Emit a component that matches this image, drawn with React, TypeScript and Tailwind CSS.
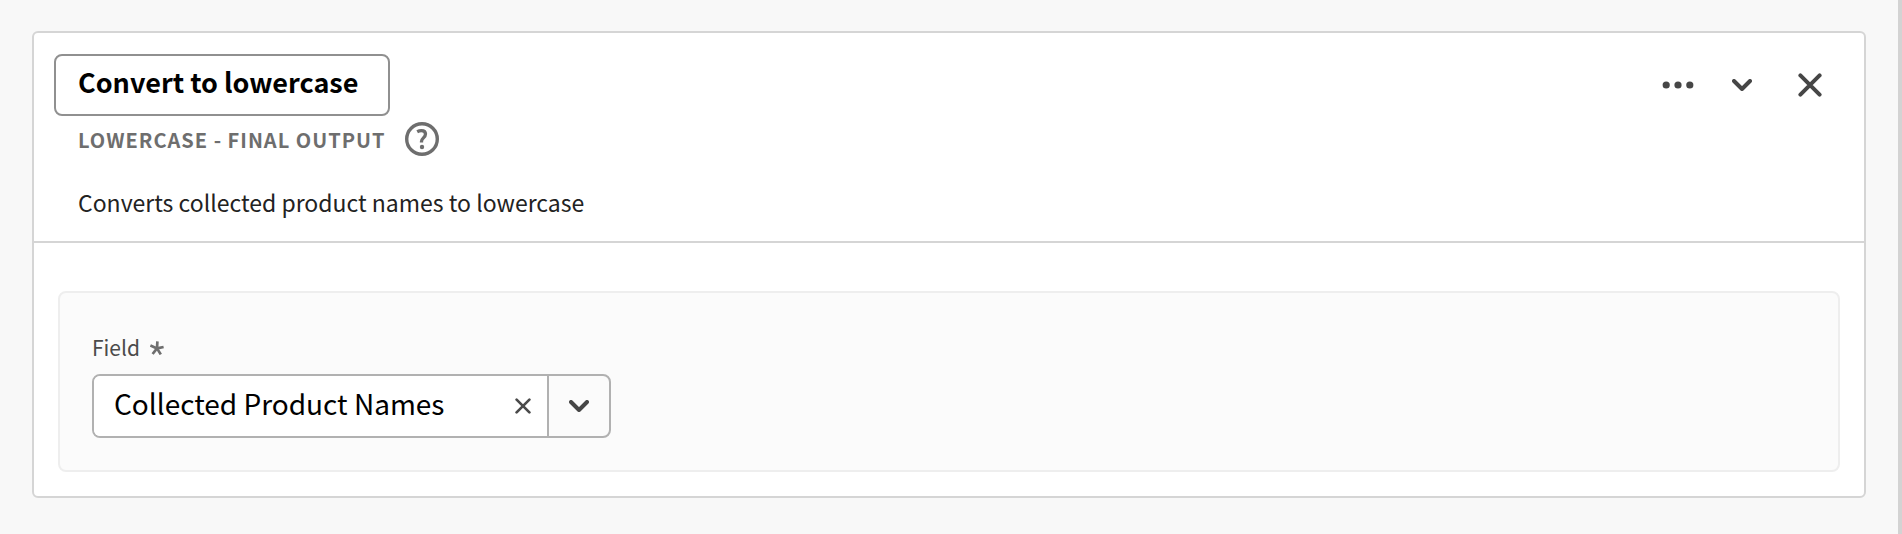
import { useState } from 'react';

function MoreIcon() {
  return (
    <svg width="32" height="8" viewBox="0 0 32 8" fill="currentColor" aria-hidden="true">
      <circle cx="4.2" cy="4" r="3.6" />
      <circle cx="16" cy="4" r="3.6" />
      <circle cx="27.800" cy="4" r="3.6" />
    </svg>
  );
}

function ChevronIcon() {
  return (
    <svg width="20" height="12" viewBox="0 0 20 12" fill="none" stroke="currentColor" strokeWidth="4" strokeLinecap="round" strokeLinejoin="round" aria-hidden="true">
      <path d="M2 2l8 8 8-8" />
    </svg>
  );
}

function CloseIcon({ size, stroke }: { size: number; stroke: number }) {
  return (
    <svg width={size} height={size} viewBox="0 0 24 24" fill="none" stroke="currentColor" strokeWidth={stroke} strokeLinecap="round" aria-hidden="true">
      <path d="M2.4 2.4l19.2 19.2M21.6 2.4L2.4 21.6" />
    </svg>
  );
}

function HelpIcon() {
  return (
    <svg width="34" height="34" viewBox="0 0 34 34" fill="none" stroke="currentColor" aria-hidden="true">
      <circle cx="17" cy="17" r="15.3" strokeWidth="3.4" />
      <path d="M12.2 9.700c1.300-.7 2.800-1.100 4.200-1.100 2.600 0 4.100 1.400 4.100 3.500 0 3.600-4 3.900-4 7.300v1.200" strokeWidth="3.3" />
      <circle cx="17" cy="25" r="2.2" fill="currentColor" stroke="none" />
    </svg>
  );
}

function AsteriskIcon() {
  return (
    <svg width="14" height="14" viewBox="0 0 14 14" stroke="currentColor" strokeWidth="2.700" aria-hidden="true">
      <path d="M7 7.400L7.400.4M7 7.400L13.600 6M7 7.400L10.800 13.400M7 7.400L2.600 13M7 7.400L.4 4.400" />
    </svg>
  );
}

export default function App() {
  const [title, setTitle] = useState('Convert to lowercase');
  const [field, setField] = useState('Collected Product Names');

  return (
    <main className="min-h-screen border-r-4 border-[#d3d3d3] bg-[#f8f8f8] pt-[31px] pr-8 pb-9 pl-8 font-['Noto_Sans_CJK_SC','Open_Sans',sans-serif]">
      <section className="rounded-md border-2 border-[#d5d5d5] bg-white">
        <header className="border-b-2 border-[#d5d5d5] pt-[21px] pr-[18px] pb-[21px] pl-5">
          <div className="flex items-center justify-between">
            <input
              aria-label="Title"
              value={title}
              onChange={(e) => setTitle(e.target.value)}
              className="h-[62px] w-[336px] rounded-lg border-2 border-[#909090] bg-white px-[22px] pb-2 text-[27px] font-bold text-black"
            />
            <div className="flex text-[#464646]">
              <button type="button" aria-label="More actions" className="flex h-12 w-16 items-center justify-center">
                <MoreIcon />
              </button>
              <button type="button" aria-label="Collapse" className="flex h-12 w-16 items-center justify-center">
                <ChevronIcon />
              </button>
              <button type="button" aria-label="Remove" className="flex h-12 w-18 items-center justify-center">
                <CloseIcon size={24} stroke={4} />
              </button>
            </div>
          </div>
          <div className="flex h-[46px] items-center gap-5 pl-6 text-[#6e6e6e]">
            <h2 className="pt-[2px] text-xl font-bold tracking-wider uppercase">Lowercase - Final output</h2>
            <button type="button" aria-label="Help">
              <HelpIcon />
            </button>
          </div>
          <p className="mt-[22px] pl-6 text-[23px] leading-9 text-[#222222]">Converts collected product names to lowercase</p>
        </header>

        <div className="px-6 pt-12 pb-6">
          <div className="rounded-lg border-2 border-[#eeeeee] bg-[#fbfbfb] px-8 pt-[39px] pb-8">
            <label htmlFor="field" className="flex h-8 items-center gap-[10px] text-[21px] text-[#4b4b4b]">
              Field
              <span className="text-[#6e6e6e]">
                <AsteriskIcon />
              </span>
            </label>
            <div className="mt-[10px] flex h-16 w-[519px] overflow-hidden rounded-lg border-2 border-[#b1b1b1]">
              <div className="flex min-w-0 flex-1 items-center bg-white pr-4 pl-5">
                <input
                  id="field"
                  value={field}
                  onChange={(e) => setField(e.target.value)}
                  className="h-full min-w-0 flex-1 pb-[6px] text-[28px] text-black"
                />
                <button type="button" aria-label="Clear" onClick={() => setField('')} className="text-[#4b4b4b]">
                  <CloseIcon size={16} stroke={4} />
                </button>
              </div>
              <button type="button" aria-label="Show options" className="flex w-[62px] items-center justify-center border-l-2 border-[#b1b1b1] text-[#464646]">
                <ChevronIcon />
              </button>
            </div>
          </div>
        </div>
      </section>
    </main>
  );
}
